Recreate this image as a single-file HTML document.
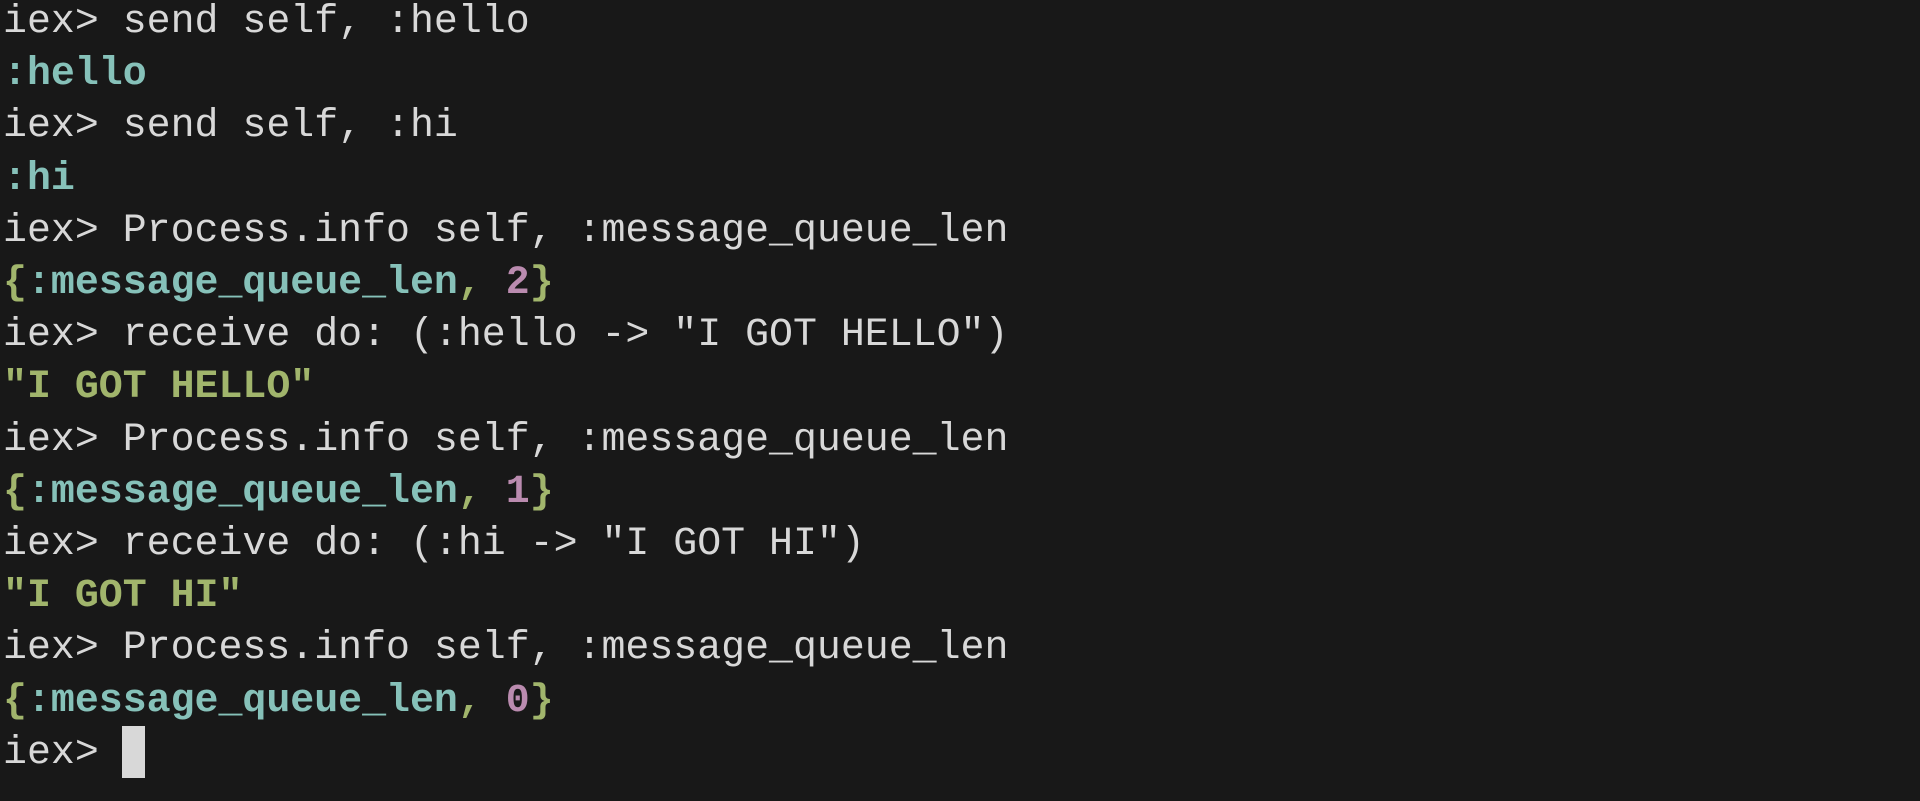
<!DOCTYPE html>
<html><head><meta charset="utf-8"><style>
html,body{margin:0;padding:0;background:#181818;width:1920px;height:801px;overflow:hidden}
pre{margin:0;padding:0 0 0 3px;position:relative;top:-4px;font-family:"Liberation Mono",monospace;font-size:39.9px;line-height:52.2px;color:#d8d8d8}
.a{color:#86c1b9;font-weight:bold}
.g{color:#a1b56c;font-weight:bold}
.p{color:#ba8baf;font-weight:bold}
.c{position:absolute;left:122px;top:726px;width:23px;height:52px;background:#d8d8d8}
</style></head><body><pre>iex> send self, :hello
<span class="a">:hello</span>
iex> send self, :hi
<span class="a">:hi</span>
iex> Process.info self, :message_queue_len
<span class="g">{</span><span class="a">:message_queue_len</span><span class="g">,</span> <span class="p">2</span><span class="g">}</span>
iex> receive do: (:hello -> "I GOT HELLO")
<span class="g">"I GOT HELLO"</span>
iex> Process.info self, :message_queue_len
<span class="g">{</span><span class="a">:message_queue_len</span><span class="g">,</span> <span class="p">1</span><span class="g">}</span>
iex> receive do: (:hi -> "I GOT HI")
<span class="g">"I GOT HI"</span>
iex> Process.info self, :message_queue_len
<span class="g">{</span><span class="a">:message_queue_len</span><span class="g">,</span> <span class="p">0</span><span class="g">}</span>
iex> </pre><div class="c"></div></body></html>
